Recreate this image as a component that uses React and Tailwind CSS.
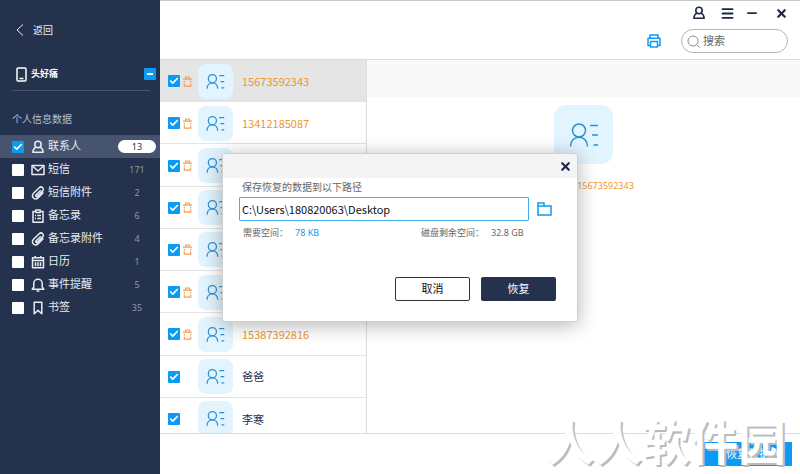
import { Check, Menu, Minus, X } from 'lucide-react';

const categories = [
  { id: 'contacts', label: '联系人', count: 13, icon: 'user', active: true },
  { id: 'sms', label: '短信', count: 171, icon: 'mail' },
  { id: 'sms-files', label: '短信附件', count: 2, icon: 'clip' },
  { id: 'notes', label: '备忘录', count: 6, icon: 'notes' },
  { id: 'notes-files', label: '备忘录附件', count: 4, icon: 'clip' },
  { id: 'calendar', label: '日历', count: 1, icon: 'calendar' },
  { id: 'reminders', label: '事件提醒', count: 5, icon: 'bell' },
  { id: 'bookmarks', label: '书签', count: 35, icon: 'bookmark' },
];

const contacts = [
  { name: '15673592343', deleted: true, selected: true },
  { name: '13412185087', deleted: true },
  { name: '', deleted: true },
  { name: '', deleted: true },
  { name: '', deleted: true },
  { name: '', deleted: true },
  { name: '15387392816', deleted: true },
  { name: '爸爸' },
  { name: '李寒' },
];

const iconPaths = {
  user: (
    <>
      <circle cx="7" cy="4.5" r="3.2" />
      <path d="M4.8 7.2C3 8.2 2 9.8 1.8 12.2h10.4C12 9.8 11 8.2 9.2 7.2" />
    </>
  ),
  mail: (
    <>
      <path d="M1 2.5h12v9H1z" />
      <path d="M1.5 3l5.5 5 5.5-5" />
    </>
  ),
  clip: (
    <path d="M9.8 4.2L5 9c-.9.9.4 2.2 1.3 1.3l5.2-5.2c2.4-2.4-1-5.6-3.3-3.3L2.5 7.3c-3.2 3.2 1.4 7.6 4.5 4.6l5.4-5.4" />
  ),
  notes: (
    <>
      <path d="M4.5 2.5H2v10.7h10V2.5H9.5" />
      <path d="M4.8 1h4.4v2.6H4.8zM4 6.5h1M6.3 6.5H10M4 9.5h1M6.3 9.5H10" />
    </>
  ),
  calendar: (
    <>
      <path d="M1.5 2.8h11v10h-11zM1.5 5.6h11M4.2 1v2.6M9.8 1v2.6" />
      <path d="M4.5 7.2v4M7 7.2v4M9.5 7.2v4" />
    </>
  ),
  bell: (
    <>
      <path d="M1.2 11.2h11.6L11.2 9V5.4a4.2 4.2 0 0 0-8.4 0V9z" />
      <path d="M5.6 13h2.8" />
    </>
  ),
  bookmark: <path d="M3.2 1.3h7.6v11.4L7 9.4l-3.8 3.3z" />,
};

function Icon({ name, className }) {
  return (
    <svg viewBox="0 0 14 14" className={className} fill="none" stroke="currentColor" strokeWidth="1.5" strokeLinejoin="round" aria-hidden="true">
      {iconPaths[name]}
    </svg>
  );
}

function Checkbox({ label, checked }) {
  return (
    <span className="relative flex size-3 shrink-0">
      <input
        type="checkbox"
        aria-label={label}
        defaultChecked={checked}
        className="peer size-full appearance-none rounded-[1px] bg-white checked:bg-[#0c9bf2]"
      />
      <Check className="pointer-events-none absolute inset-0 hidden size-full p-px text-white peer-checked:block" strokeWidth={4} />
    </span>
  );
}

function ContactIcon({ className }) {
  return (
    <svg viewBox="0 0 30 24" className={className} fill="none" stroke="currentColor" aria-hidden="true">
      <circle cx="10" cy="7.5" r="6.5" />
      <path d="M1.5 23.5c0-5.6 3.6-9.2 8.5-9.2s8.5 3.6 8.5 9.2M21 2.5h8M23 12h6M24.5 22h4.5" />
    </svg>
  );
}

function TrashIcon() {
  return (
    <svg viewBox="0 0 9 11" className="h-[11px] w-[9px] text-[#f59d55]" fill="none" stroke="currentColor" strokeWidth="1.2" aria-hidden="true">
      <path d="M0 3.2h9M2.6 3V1h3.8v2M1.3 4.8v1.6M7.7 4.8v1.6M1.3 7.4v2.8h6.4V7.4" />
    </svg>
  );
}

function Sidebar() {
  return (
    <aside className="w-40 shrink-0 bg-[#25324d] text-[#e8ecf3]">
      <button className="mt-5 ml-4 flex h-5 items-center gap-[9px] text-[10px]">
        <svg viewBox="0 0 8 12" className="h-3 w-2" fill="none" stroke="currentColor" aria-hidden="true">
          <path d="M7 .5L1 6l6 5.5" />
        </svg>
        返回
      </button>

      <div className="mt-[26px] mr-1 ml-3 flex h-4 items-center pl-1">
        <svg viewBox="0 0 11 15" className="h-[15px] w-[11px]" fill="none" stroke="white" strokeWidth="1.5" aria-hidden="true">
          <rect x="1" y="1" width="9" height="13" rx="1" />
          <path d="M3.5 11.5h4" />
        </svg>
        <span className="ml-1 text-[9px] leading-4 font-bold text-white">头好痛</span>
        <button aria-label="收起" className="ml-auto flex size-3 items-center justify-center rounded-[1px] bg-[#0c9bf2]">
          <span className="h-0.5 w-1.5 bg-white" />
        </button>
      </div>
      <hr className="mt-2 mr-2.5 ml-3 border-[#46536d]" />

      <h2 className="mt-[18px] ml-3 h-[26px] text-[10px] leading-5 text-[#b9c1cf]">个人信息数据</h2>

      <ul>
        {categories.map((item) => (
          <li key={item.id} className={`flex h-[23px] items-center pl-3 ${item.active ? 'bg-[#47546f]' : ''}`}>
            <Checkbox label={item.label} checked={item.active} />
            <a href={`#${item.id}`} className="ml-[7px] flex flex-1 items-center gap-[3px] pr-1">
              <Icon name={item.icon} className="size-3.5" />
              <span className="text-[11px]">{item.label}</span>
              <span
                className={`ml-auto w-[38px] rounded-full text-center text-[9px] leading-[13px] ${
                  item.active ? 'bg-white text-[#25324d]' : 'text-[#8e98aa]'
                }`}
              >
                {item.count}
              </span>
            </a>
          </li>
        ))}
      </ul>
    </aside>
  );
}

function Header() {
  return (
    <header className="h-[60px] border-t border-b border-t-[#c9c9c9] border-b-[#dcdcdc] pr-3 text-[#1c2742]">
      <div className="flex h-6 items-center justify-end gap-2.5">
        <button aria-label="账户"><Icon name="user" className="size-3.5" /></button>
        <button aria-label="菜单" className="ml-1"><Menu className="size-[15px]" strokeWidth={3} /></button>
        <button aria-label="最小化"><Minus className="size-3.5" strokeWidth={3} /></button>
        <button aria-label="关闭" className="ml-1.5"><X className="size-[13px]" strokeWidth={4} /></button>
      </div>
      <div className="mt-1 flex h-6 items-center justify-end gap-5">
        <button aria-label="打印" className="text-[#0c9bf2]">
          <svg viewBox="0 0 14 14" className="size-3.5" fill="none" stroke="currentColor" strokeWidth="1.5" strokeLinejoin="round" aria-hidden="true">
            <path d="M3 4V1h8v3M3 11.5H1V4.2h12v7.3h-2M3.5 7.5h7V13h-7z" />
          </svg>
        </button>
        <label className="flex h-6 w-[107px] items-center gap-[3px] rounded-full border border-[#b5b5b5] px-[5px]">
          <svg viewBox="0 0 13 13" className="size-[13px] shrink-0 text-[#8c8c8c]" fill="none" stroke="currentColor" aria-hidden="true">
            <circle cx="6" cy="6" r="5" />
            <path d="M9.6 9.6l3 3" />
          </svg>
          <input type="search" aria-label="搜索" placeholder="搜索" className="w-full min-w-0 text-[11px] outline-none placeholder:text-[#666]" />
        </label>
      </div>
    </header>
  );
}

function ContactList() {
  return (
    <div className="h-[373px] w-[207px] shrink-0 overflow-hidden border-r border-[#dcdcdc]">
      <ul className="grid h-[380px] grid-rows-9">
        {contacts.map((contact, i) => (
          <li key={i} className={`flex items-center border-b border-[#e4e4e4] pt-px pl-2 ${contact.selected ? 'bg-[#e5e5e5]' : ''}`}>
            <Checkbox label={contact.name || '联系人'} checked />
            <span className="ml-[3px] w-[9px]">{contact.deleted && <TrashIcon />}</span>
            <span className="ml-1.5 flex h-[35px] w-[35px] items-center justify-center rounded-lg bg-[#e2f4fe] text-[#2a91d4]">
              <ContactIcon className="h-[15px] w-[19px] stroke-2" />
            </span>
            <span
              className={`ml-[9px] font-['Noto_Sans_CJK_SC',sans-serif] text-[11px] ${contact.deleted ? 'text-[#f0962a]' : 'text-[#25324d]'}`}
            >
              {contact.name}
            </span>
          </li>
        ))}
      </ul>
    </div>
  );
}

function ContactDetail() {
  return (
    <section className="flex-1">
      <div className="h-[37px] bg-[#f8f8f8]" />
      <div className="mt-2 flex flex-col items-center">
        <div className="flex size-[59px] items-center justify-center rounded-xl bg-[#e2f4fe] text-[#2a91d4]">
          <ContactIcon className="h-6 w-[30px] stroke-[1.5]" />
        </div>
        <p className="mt-3.5 ml-11 text-[9px] leading-4 text-[#f0962a]">15673592343</p>
      </div>
    </section>
  );
}

function RestoreDialog() {
  return (
    <div
      role="dialog"
      aria-label="恢复"
      className="absolute top-[153px] left-1/2 w-[356px] -translate-x-1/2 rounded-[3px] border border-[#d0d0d0] bg-white text-[#666] shadow-[0_3px_20px_rgba(0,0,0,0.3)]"
    >
      <div className="flex h-6 items-center justify-end bg-[#f4f4f4] pr-[5px]">
        <button aria-label="关闭" className="text-[#1c2742]"><X className="size-[13px]" strokeWidth={4} /></button>
      </div>
      <form className="px-4 pb-5" onSubmit={(e) => e.preventDefault()}>
        <label htmlFor="path" className="block pl-[3px] text-[10px] leading-[19px]">保存恢复的数据到以下路径</label>
        <div className="flex items-center gap-2">
          <input
            id="path"
            defaultValue="C:\Users\180820063\Desktop"
            className="h-6 w-[290px] rounded-[1px] border border-[#47aeea] px-0.5 font-['Noto_Sans_CJK_SC',sans-serif] text-[11px] text-[#111] outline-none"
          />
          <button type="button" aria-label="选择文件夹" className="text-[#0c9bf2]">
            <svg viewBox="0 0 15 14" className="h-3.5 w-[15px]" fill="none" stroke="currentColor" strokeWidth="1.5" aria-hidden="true">
              <path d="M1 13V1h6v3h7v9zM1 4h6" />
            </svg>
          </button>
        </div>
        <div className="mt-1 flex text-[9px] leading-4">
          <p className="w-[182px] pl-1">需要空间：<span className="ml-[7px] text-[#0c9bf2]">78 KB</span></p>
          <p>磁盘剩余空间：<span className="ml-[7px]">32.8 GB</span></p>
        </div>
        <div className="mt-9 flex justify-end gap-[11px] pr-[5px] text-[11px]">
          <button type="button" className="h-6 w-[75px] rounded-[2px] border border-[#333] text-[#111]">取消</button>
          <button type="submit" className="h-6 w-[75px] rounded-[2px] bg-[#25324d] text-white">恢复</button>
        </div>
      </form>
    </div>
  );
}

export default function App() {
  return (
    <div className="relative flex min-h-screen overflow-hidden bg-white font-['Noto_Sans','Noto_Sans_CJK_SC',sans-serif]">
      <Sidebar />
      <main className="flex min-w-0 flex-1 flex-col">
        <Header />
        <div className="flex">
          <ContactList />
          <ContactDetail />
        </div>
        <footer className="flex flex-1 items-start justify-end border-t border-[#dcdcdc] pt-2 pr-2">
          <button className="h-6 w-[88px] bg-[#0c9bf2] text-[11px] text-white">恢复数据</button>
        </footer>
      </main>
      <RestoreDialog />
      <p className="pointer-events-none absolute right-3.5 bottom-2 text-5xl font-bold text-white [text-shadow:2px_2px_0_#bbb]">
        人人软件园
      </p>
    </div>
  );
}
